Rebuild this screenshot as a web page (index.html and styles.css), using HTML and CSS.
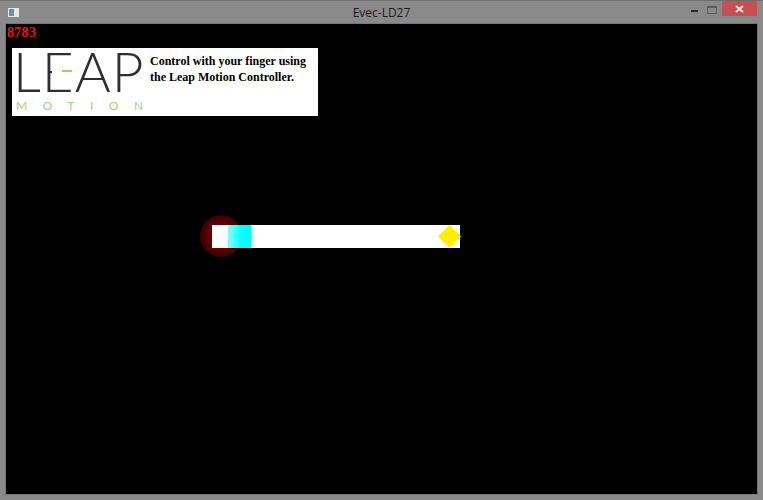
FILE: index.html
```html
<!DOCTYPE html>
<html lang="en">
<head>
    <meta charset="UTF-8">
    <meta name="viewport" content="width=device-width, initial-scale=1.0">
    <link rel="stylesheet" href="styles.css">
    <title>Evec-LD27</title>
</head>
<body>
    <div class="window">
        <div class="titlebar">
            <svg class="app-icon" width="11" height="9" viewBox="0 0 11 9">
                <rect width="11" height="9" fill="#e4e8e8"/>
                <rect x="1" y="1" width="5" height="7" fill="#5f9a94"/>
            </svg>
            <span class="title">Evec-LD27</span>
            <div class="controls">
                <div class="btn-min"></div>
                <div class="btn-max"></div>
                <div class="btn-close">
                    <svg width="9" height="8" viewBox="0 0 9 8">
                        <path d="M1 1 L8 7 M8 1 L1 7" stroke="#f6e4e4" stroke-width="2"/>
                    </svg>
                </div>
            </div>
        </div>
        <div class="game">
            <div class="score">8783</div>
            <div class="card">
                <div class="logo">
                    <div class="logo-leap">LEAP</div>
                    <div class="logo-bar"></div>
                    <div class="logo-motion">MOTION</div>
                </div>
                <p class="card-text">Control with your finger using<br>the Leap Motion Controller.</p>
            </div>
            <div class="track">
                <div class="glow"></div>
                <div class="cyan"></div>
                <div class="diamond"></div>
            </div>
        </div>
    </div>
</body>
</html>
```

FILE: styles.css
```css
html, body {
    margin: 0;
    padding: 0;
    background: #888;
}

.window {
    width: 763px;
    height: 500px;
    display: flex;
    flex-direction: column;
    background: #8a8a8a;
    box-sizing: border-box;
    border-top: 1px solid #6e6e6e;
    overflow: hidden;
}

.titlebar {
    height: 23px;
    flex: none;
    display: flex;
    position: relative;
    padding-left: 8px;
    padding-right: 6px;
}

.app-icon {
    margin-top: 7px;
}

.title {
    position: absolute;
    left: 0;
    right: 0;
    top: 4px;
    text-align: center;
    font-family: "Open Sans", sans-serif;
    font-size: 12px;
    line-height: 16px;
    color: #1c1c1c;
}

.controls {
    margin-left: auto;
    display: flex;
    position: relative;
}

.btn-min {
    width: 7px;
    height: 2px;
    margin-top: 9px;
    background: #2b2b2b;
}

.btn-max {
    width: 8px;
    height: 5px;
    margin-left: 9px;
    margin-top: 5px;
    border: 1px solid #5c5c5c;
    border-top-width: 2px;
}

.btn-close {
    width: 35px;
    height: 15px;
    margin-left: 5px;
    background: #c75050;
    display: flex;
    align-items: center;
    justify-content: center;
}

.game {
    height: 470px;
    margin: 0 6px;
    background: #000;
    box-shadow: 0 0 0 1px #777;
    display: flex;
    flex-direction: column;
    align-items: flex-start;
}

.score {
    font-family: "Liberation Serif", serif;
    font-weight: bold;
    font-size: 14px;
    line-height: 16px;
    letter-spacing: 0.3px;
    color: #f01010;
    margin: 1px 0 0 1px;
}

.card {
    width: 306px;
    height: 68px;
    margin: 7px 0 0 6px;
    background: #fff;
    display: flex;
}

.logo {
    width: 138px;
    flex: none;
    position: relative;
    overflow: hidden;
}

.logo-leap {
    font-family: "Lato", sans-serif;
    font-weight: 300;
    font-size: 55px;
    line-height: 44px;
    letter-spacing: 1px;
    margin: 1px 0 0 1px;
    color: #2e2e30;
}

.logo-bar {
    position: absolute;
    left: 40px;
    top: 20px;
    width: 22px;
    height: 6px;
    background: #fff;
    border-left: 10px solid #fff;
    box-sizing: border-box;
}

.logo-bar::after {
    content: "";
    display: block;
    width: 10px;
    height: 2px;
    margin-top: 2px;
    background: #a4d05e;
}

.logo-motion {
    font-family: "Lato", sans-serif;
    font-size: 12px;
    line-height: 14px;
    letter-spacing: 15.5px;
    margin: 6px 0 0 4px;
    color: #a8d46a;
}

.card-text {
    margin: 5px 0 0 0;
    padding-left: 0;
    margin-left: 0;
    font-family: "Liberation Serif", serif;
    font-weight: bold;
    font-size: 12px;
    line-height: 16px;
    color: #000;
    white-space: nowrap;
}

.track {
    width: 248px;
    height: 23px;
    margin: 109px 0 0 206px;
    background: #fff;
    position: relative;
    display: flex;
}

.glow {
    position: absolute;
    left: -12px;
    top: -10px;
    width: 42px;
    height: 42px;
    border-radius: 50%;
    background: radial-gradient(circle, #700000 0%, #600000 45%, #300000 75%, #000 100%);
    z-index: 0;
}

.track::before {
    content: "";
    position: absolute;
    inset: 0;
    background: #fff;
    z-index: 1;
}

.cyan {
    width: 23px;
    height: 23px;
    margin-left: 16px;
    background: linear-gradient(to right, #80ffff, #00ffff 60%);
    position: relative;
    z-index: 2;
}

.diamond {
    position: absolute;
    left: 226px;
    top: 0;
    width: 23px;
    height: 23px;
    background: #ffee00;
    clip-path: polygon(50% 0, 100% 50%, 50% 100%, 0 50%);
    z-index: 2;
}
```
